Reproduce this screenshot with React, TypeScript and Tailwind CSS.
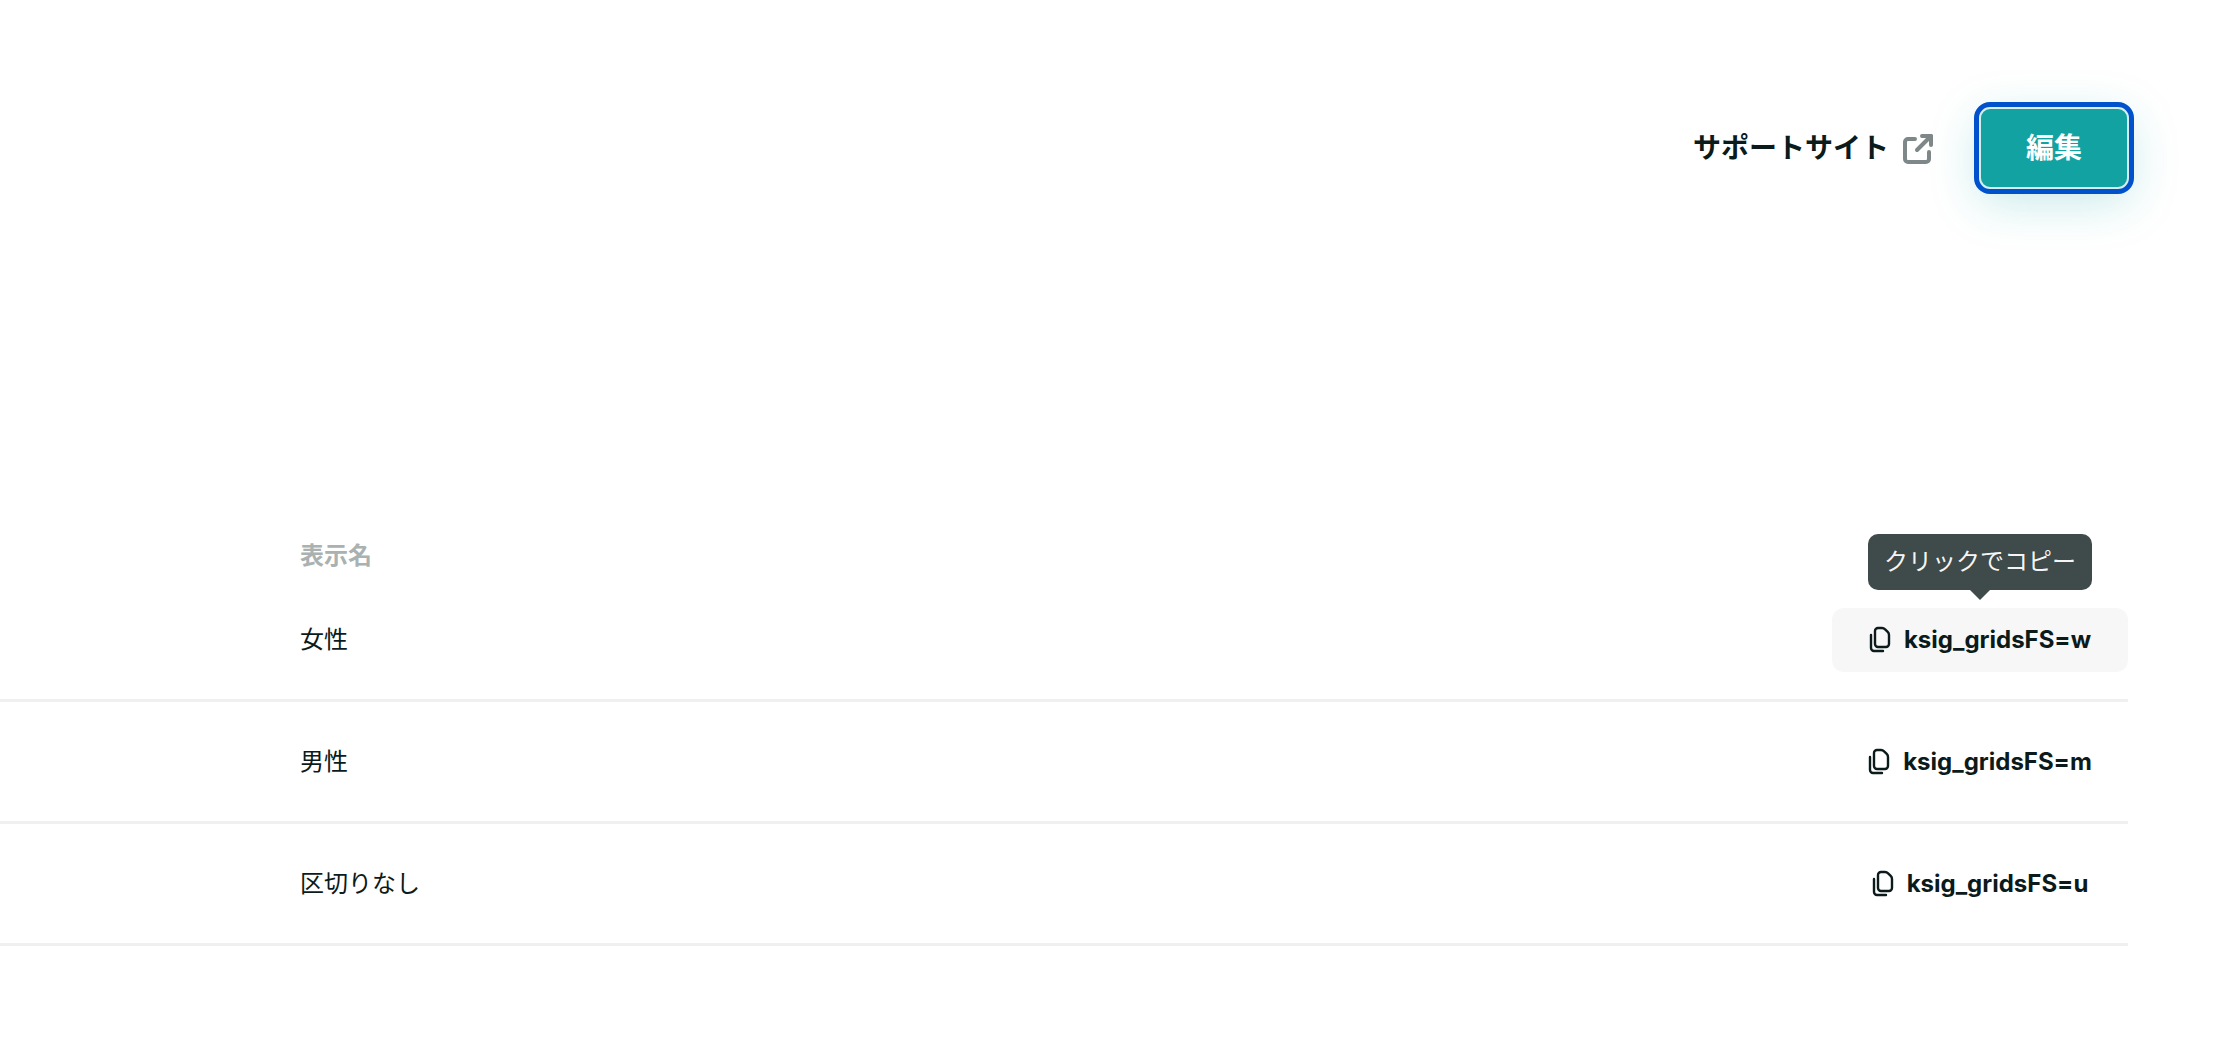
import type { ReactNode } from "react";

const fontStack = "font-['Inter','Noto_Sans_CJK_JP',sans-serif]";

function CopyIcon() {
    return (
        <svg width="22" height="27" viewBox="0 0 22 27" fill="none" stroke="#0b1a1a" strokeWidth="2.4" strokeLinecap="round" strokeLinejoin="round">
            <path d="M9 2h4c1.2 0 2.3.5 3.1 1.3l2.6 2.6c.8.8 1.3 1.9 1.3 3.1v9a3 3 0 0 1-3 3H9a3 3 0 0 1-3-3V5a3 3 0 0 1 3-3z" />
            <path d="M2 9v13a3 3 0 0 0 3 3h9" />
        </svg>
    );
}

function ExternalIcon() {
    return (
        <svg width="31" height="31" viewBox="0 0 31 31" fill="none" stroke="#7f8888" strokeWidth="4" strokeLinecap="round" strokeLinejoin="round">
            <path d="M12 6H5a3 3 0 0 0-3 3v17a3 3 0 0 0 3 3h18a3 3 0 0 0 3-3v-7" />
            <path d="M14 17L28 3" />
            <path d="M19 3h9v9" />
        </svg>
    );
}

function Row({ label, code, hovered, tip }: { label: string; code: string; hovered?: boolean; tip?: ReactNode }) {
    return (
        <div className="flex h-[122px] items-center justify-between border-b-[3px] border-[#f0f0f0] pl-[300px]">
            <span className="text-[24px] text-[#0b1a1a]">{label}</span>
            <div className={`relative flex h-[64px] w-[296px] items-center justify-center gap-[13px] rounded-[12px] ${hovered ? "bg-[#f7f7f7]" : ""}`}>
                {tip}
                <CopyIcon />
                <span className="text-[24px] font-bold text-[#0b1a1a]">{code}</span>
            </div>
        </div>
    );
}

export default function App() {
    return (
        <div className={`h-[1056px] w-full overflow-hidden bg-white ${fontStack}`}>
            <div className="flex items-center justify-end gap-[45px] pt-[107px] pr-[89px]">
                <a className="flex items-center gap-[14px] text-[28px] font-bold text-[#0b1a1a]">
                    サポートサイト
                    <ExternalIcon />
                </a>
                <button className="flex h-[82px] w-[150px] items-center justify-center rounded-[11px] border-2 border-[#d6eeee] bg-[#13a2a2] text-[28px] font-bold text-white shadow-[0_12px_48px_rgba(19,162,162,0.25)] outline-[5px] outline-[#0052cc] outline-solid">
                    編集
                </button>
            </div>

            <div className="mt-[343px] mr-[90px]">
                <div className="flex h-[48px] items-center pl-[300px] text-[24px] font-bold text-[#aab1b1]">表示名</div>
                <Row
                    label="女性"
                    code="ksig_gridsFS=w"
                    hovered
                    tip={
                        <div className="absolute -top-[74px] left-[36px] flex h-[56px] w-[224px] items-center justify-center rounded-[10px] bg-[#3f4a4a] text-[24px] text-[#f4f6f6]">
                            クリックでコピー
                            <span className="absolute -bottom-[10px] left-1/2 h-0 w-0 -translate-x-1/2 border-x-[10px] border-t-[10px] border-x-transparent border-t-[#3f4a4a]" />
                        </div>
                    }
                />
                <Row label="男性" code="ksig_gridsFS=m" />
                <Row label="区切りなし" code="ksig_gridsFS=u" />
            </div>
        </div>
    );
}
